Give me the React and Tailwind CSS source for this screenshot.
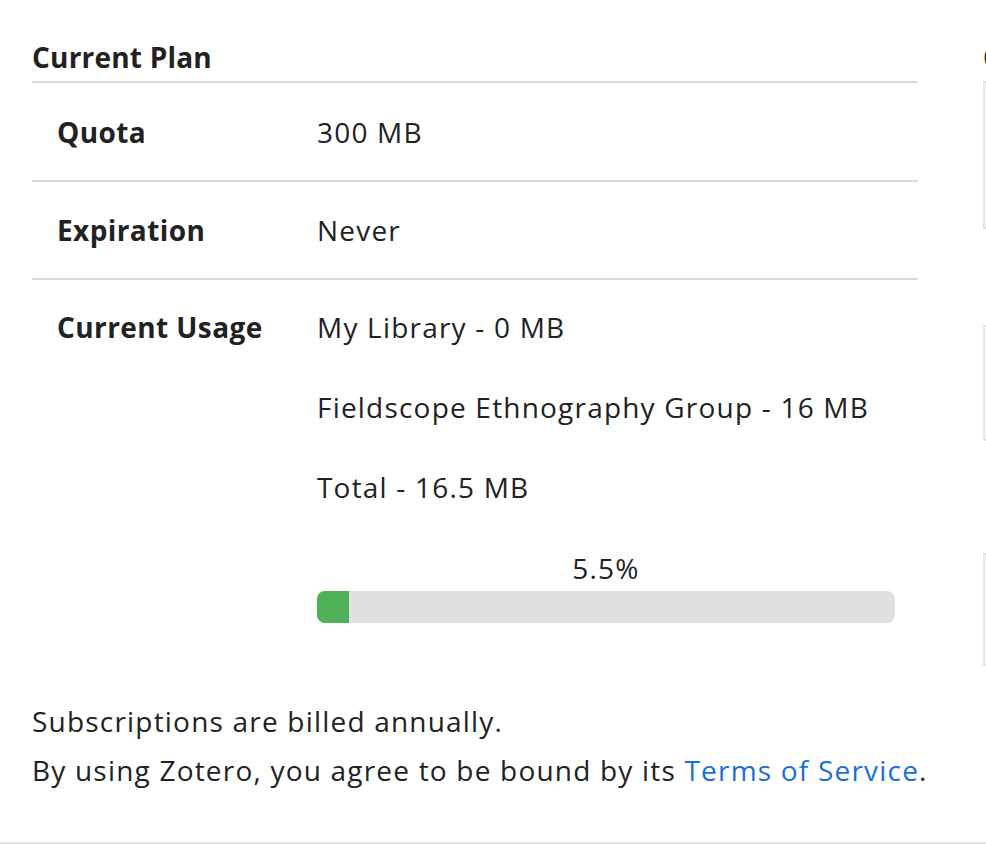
export default function App() {
  const usage = [
    { name: "My Library", size: "0 MB" },
    { name: "Fieldscope Ethnography Group", size: "16 MB" },
  ];
  const percent = 5.5;

  return (
    <div
      className="w-[986px] h-[844px] overflow-hidden bg-white text-[#222] border-b-2 border-[#e3e3e3] flex"
      style={{ fontFamily: "'Open Sans', 'Noto Sans', sans-serif" }}
    >
      <div className="ml-[32px] w-[886px] shrink-0">
        <h2 className="pt-[37px] text-[28px] leading-[40px] font-bold tracking-[0.2px] mb-[4px]">Current Plan</h2>
        <div className="text-[28px] leading-[40px] tracking-[1.2px] border-t-2 border-[#d9d9d9]">
          <div className="grid grid-cols-[285px_1fr] border-b-2 border-[#d9d9d9] py-[28.5px]">
            <div className="pl-[25px] font-bold tracking-[0.4px]">Quota</div>
            <div>300 MB</div>
          </div>
          <div className="grid grid-cols-[285px_1fr] border-b-2 border-[#d9d9d9] py-[28px]">
            <div className="pl-[25px] font-bold tracking-[0.4px]">Expiration</div>
            <div>Never</div>
          </div>
          <div className="grid grid-cols-[285px_1fr] pt-[27px] pb-[32px]">
            <div className="pl-[25px] font-bold tracking-[0.4px]">Current Usage</div>
            <div>
              <div className="flex flex-col gap-[40px]">
                {usage.map(u => (
                  <div key={u.name}>{u.name} - {u.size}</div>
                ))}
                <div>Total - 16.5 MB</div>
              </div>
              <div className="w-[578px] mt-[41px]">
                <div className="text-center mb-[3px]">{percent}%</div>
                <div className="h-[32px] rounded-[8px] bg-[#e0e0e0] overflow-hidden">
                  <div className="h-full bg-[#4fb058]" style={{ width: `${percent}%` }} />
                </div>
              </div>
            </div>
          </div>
        </div>
        <div className="mt-[42px] text-[28px] leading-[49px] tracking-[1.2px]">
          <p>Subscriptions are billed annually.</p>
          <p className="whitespace-nowrap">
            By using Zotero, you agree to be bound by its{" "}
            <a href="#" className="text-[#1a6fd6]">Terms of Service</a>.
          </p>
        </div>
      </div>
      <div className="ml-[65px] w-[300px] shrink-0">
        <h2 className="pt-[37px] text-[28px] leading-[40px] font-bold mb-[4px]">Change Plan</h2>
        <div className="h-[148px] border-2 border-[#e6e6e6] bg-[#fafafa]" />
        <div className="mt-[96px] h-[116px] border-2 border-[#e6e6e6] bg-[#fafafa]" />
        <div className="mt-[112px] h-[113px] border-2 border-[#e6e6e6] bg-[#fafafa]" />
      </div>
    </div>
  );
}
